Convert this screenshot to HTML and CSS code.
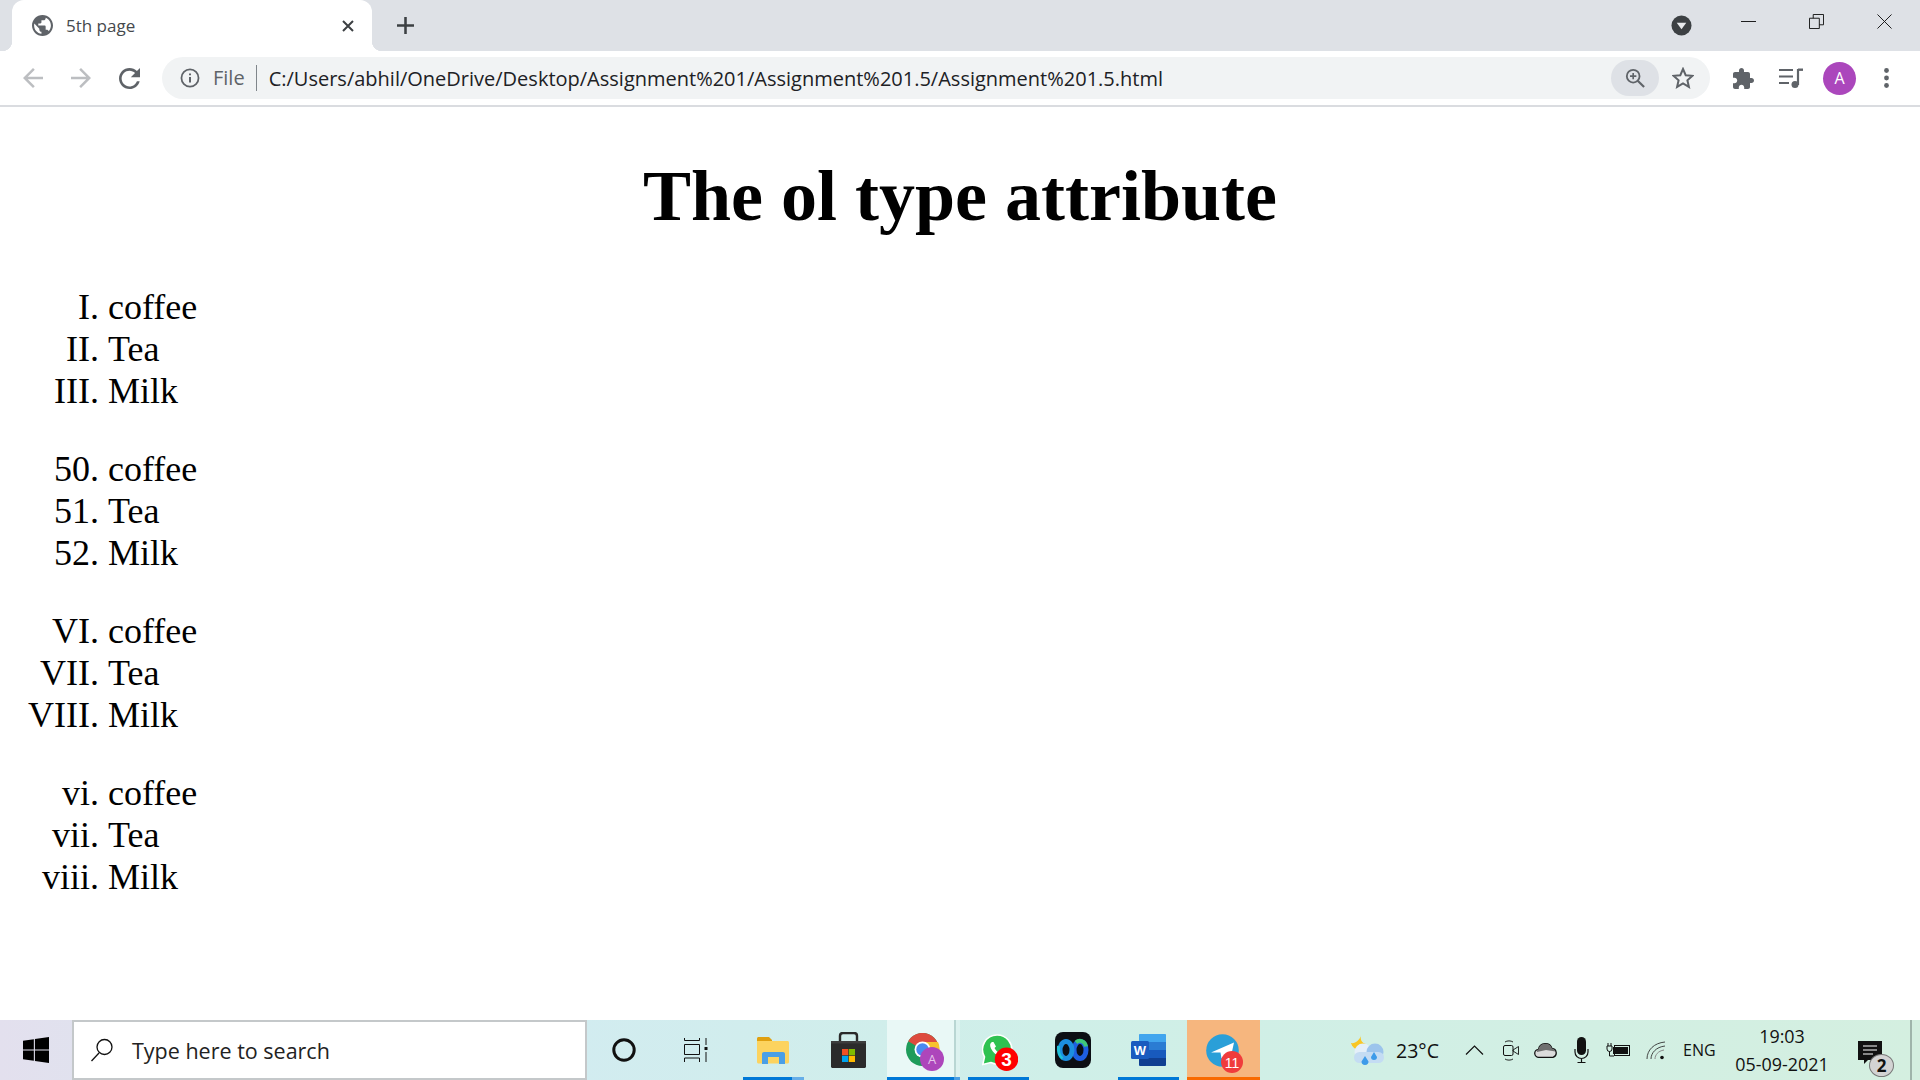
FILE: index.html
```html
<!DOCTYPE html>
<html lang="en">
<head>
  <meta charset="utf-8" />
  <title>5th page</title>
  <link rel="stylesheet" href="styles.css">
</head>
<body>
  <div class="window">
    <header class="tabstrip">
      <div class="tab">
        <svg class="favicon" viewBox="2 2 20 20"><path d="M12 2C6.48 2 2 6.48 2 12s4.48 10 10 10 10-4.48 10-10S17.52 2 12 2zm-1 17.93c-3.95-.49-7-3.85-7-7.93 0-.62.08-1.21.21-1.79L9 15v1c0 1.100.9 2 2 2v1.930zm6.900-2.540c-.26-.81-1-1.390-1.900-1.390h-1v-3c0-.55-.45-1-1-1H8v-2h2c.55 0 1-.45 1-1V7h2c1.100 0 2-.9 2-2v-.41c2.930 1.190 5 4.060 5 7.410 0 2.080-.8 3.970-2.100 5.390z" fill="#5f6368"/></svg>
        <span class="tab-title">5th page</span>
        <svg class="tab-close" viewBox="0 0 12 12"><path d="M1 1l10 10M11 1L1 11" stroke="#3c4043" stroke-width="2"/></svg>
      </div>
      <svg class="new-tab" viewBox="0 0 16 16"><path d="M8 0v16M0 8h16" stroke="#3c4043" stroke-width="2.4"/></svg>
      <div class="strip-right">
        <svg class="tab-search" viewBox="0 0 22 22"><circle cx="11" cy="11" r="10.500" fill="#3c4043"/><path d="M6 8h10l-5 7z" fill="#e8eaed"/></svg>
        <div class="win-buttons">
          <svg viewBox="0 0 16 16"><path d="M0 8h16" stroke="#111"/></svg>
          <svg viewBox="0 0 16 16"><path d="M.5 4.500h10.500v11H.5zM4.500 4.500V.5h11v11h-4.500" fill="none" stroke="#111"/></svg>
          <svg viewBox="0 0 16 16"><path d="M.5.500l15 15M15.500.500l-15 15" stroke="#111"/></svg>
        </div>
      </div>
    </header>

    <nav class="toolbar">
      <svg class="nav-icon" viewBox="4 4 16 16"><path d="M20 11H7.830l5.590-5.590L12 4l-8 8 8 8 1.410-1.410L7.830 13H20v-2z" fill="#bcbec1"/></svg>
      <svg class="nav-icon" viewBox="4 4 16 16"><path d="M12 4l-1.410 1.410L16.170 11H4v2h12.170l-5.580 5.590L12 20l8-8z" fill="#bcbec1"/></svg>
      <svg class="nav-icon reload" viewBox="4 4 16 16"><path d="M17.650 6.350C16.200 4.900 14.210 4 12 4c-4.420 0-7.990 3.580-7.990 8s3.570 8 7.990 8c3.730 0 6.840-2.550 7.730-6h-2.080c-.82 2.330-3.040 4-5.650 4-3.310 0-6-2.690-6-6s2.690-6 6-6c1.660 0 3.140.69 4.220 1.780L13 11h7V4l-2.350 2.350z" fill="#5f6368"/></svg>
      <div class="omnibox">
        <svg class="info-icon" viewBox="0 0 18 18"><circle cx="9" cy="9" r="7.700" fill="none" stroke="#5f6368" stroke-width="1.600"/><path d="M9 8v5M9 5v1.600" stroke="#5f6368" stroke-width="1.800"/></svg>
        <span class="scheme">File</span>
        <span class="url">C:/Users/abhil/OneDrive/Desktop/Assignment%201/Assignment%201.5/Assignment%201.5.html</span>
        <span class="zoom-chip">
          <svg viewBox="0 0 22 22"><circle cx="9" cy="9" r="7" fill="none" stroke="#5f6368" stroke-width="2"/><path d="M14 14l7 7" stroke="#5f6368" stroke-width="2.400"/><path d="M9 5.500v7M5.500 9h7" stroke="#5f6368" stroke-width="1.800"/></svg>
        </span>
        <svg class="star" viewBox="0 0 22 22"><path d="M11 2l2.700 6.200 6.800.6-5.100 4.500 1.500 6.600L11 16.400l-5.900 3.500 1.500-6.600L1.500 8.800l6.800-.6z" fill="none" stroke="#5f6368" stroke-width="2"/></svg>
      </div>
      <svg class="puzzle" viewBox="2 1 21 21"><path d="M20.500 11H19V7c0-1.100-.9-2-2-2h-4V3.500C13 2.120 11.880 1 10.500 1S8 2.120 8 3.500V5H4c-1.100 0-1.990.9-1.990 2v3.800H3.500c1.490 0 2.700 1.210 2.700 2.700s-1.210 2.700-2.700 2.700H2V20c0 1.100.9 2 2 2h3.800v-1.500c0-1.490 1.210-2.700 2.700-2.700 1.490 0 2.700 1.210 2.700 2.700V22H17c1.100 0 2-.9 2-2v-4h1.500c1.380 0 2.500-1.120 2.500-2.500S21.880 11 20.500 11z" fill="#5f6368"/></svg>
      <svg class="queue" viewBox="0 0 24 20"><path d="M0 2h14M0 8.500h14M0 15h10" stroke="#5f6368" stroke-width="2"/><path d="M19 1v16" stroke="#5f6368" stroke-width="2.200"/><circle cx="16" cy="16.500" r="3.500" fill="#5f6368"/><path d="M19 0.500h5v2.400h-5z" fill="#5f6368"/></svg>
      <div class="avatar">A</div>
      <svg class="menu-dots" viewBox="0 0 5 20"><circle cx="2.500" cy="2.500" r="2.400" fill="#5f6368"/><circle cx="2.500" cy="10" r="2.400" fill="#5f6368"/><circle cx="2.500" cy="17.500" r="2.400" fill="#5f6368"/></svg>
    </nav>

    <main class="page">
      <h1>The ol type attribute</h1>
      <ol type="I">
        <li>coffee</li>
        <li>Tea</li>
        <li>Milk</li>
      </ol>
      <ol start="50">
        <li>coffee</li>
        <li>Tea</li>
        <li>Milk</li>
      </ol>
      <ol type="I" start="6">
        <li>coffee</li>
        <li>Tea</li>
        <li>Milk</li>
      </ol>
      <ol type="i" start="6">
        <li>coffee</li>
        <li>Tea</li>
        <li>Milk</li>
      </ol>
    </main>

    <footer class="taskbar">
      <div class="start">
        <svg viewBox="0 0 24 24"><path d="M0 3.400l10-1.400v9.500H0zM11 1.800L24 0v11.500H11zM0 12.500h10V22L0 20.600zM11 12.500h13V24l-13-1.800z" fill="#000"/></svg>
      </div>
      <div class="searchbox">
        <svg viewBox="0 0 24 24"><circle cx="14.500" cy="9" r="7.500" fill="none" stroke="#111" stroke-width="1.300"/><path d="M9 15L1.500 23" stroke="#111" stroke-width="1.300"/></svg>
        <span>Type here to search</span>
      </div>
      <div class="task-btn">
        <svg class="ic-cortana" viewBox="0 0 24 24"><circle cx="12" cy="12" r="10.200" fill="none" stroke="#111" stroke-width="3"/></svg>
      </div>
      <div class="task-btn">
        <svg class="ic-taskview" viewBox="0 0 24 24"><path d="M.5 0v2.500h15V0M.5 6.500h15v10h-15zM.5 24v-4h15v4M22 0v7M22 14v10" fill="none" stroke="#111"/><path d="M20.500 9h3v3h-3z" fill="#111"/></svg>
      </div>
      <div class="task-btn is-open is-stacked">
        <svg class="ic-explorer" viewBox="0 0 32 27"><path d="M0 1.500C0 .7.7 0 1.500 0H12l3 3v3H0z" fill="#e0a010"/><path d="M0 4h30.500c.8 0 1.500.7 1.500 1.500V25c0 .8-.7 1.500-1.500 1.500h-29C.7 26.500 0 25.800 0 25z" fill="#fcd35f"/><path d="M5 27V17c0-1.100.9-2 2-2h19c1.100 0 2 .9 2 2v10h-6v-7H11v7z" fill="#4a9fe6"/></svg>
      </div>
      <div class="task-btn">
        <svg class="ic-store" viewBox="0 0 35 36"><path d="M9 10V4c0-1.700 1.300-3 3-3h11c1.700 0 3 1.300 3 3v6" fill="none" stroke="#2a2a2a" stroke-width="2.400"/><path d="M0 9h35v25.500c0 .8-.7 1.500-1.500 1.500h-32C.7 36 0 35.300 0 34.500z" fill="#2b2b2b"/><path d="M0 9h35v2.500H0z" fill="#3d3d3d"/><rect x="11" y="17" width="6.200" height="6.200" fill="#f25022"/><rect x="17.800" y="17" width="6.200" height="6.200" fill="#7fba00"/><rect x="11" y="23.800" width="6.200" height="6.200" fill="#00a4ef"/><rect x="17.800" y="23.800" width="6.200" height="6.200" fill="#ffb900"/></svg>
      </div>
      <div class="task-btn is-active">
        <svg class="ic-chrome" viewBox="0 0 38 38"><circle cx="16.500" cy="16.500" r="16.500" fill="#1e9c5a"/><path d="M2.200 8.200A16.500 16.500 0 0 1 33 16.500H16.500z" fill="#dd4b3e"/><path d="M16.500 9H32a16.500 16.500 0 0 1-6 21L16.500 16.500z" fill="#f7c32e"/><circle cx="16.500" cy="16.500" r="8" fill="#fff"/><circle cx="16.500" cy="16.500" r="6.200" fill="#4a8af0"/><circle cx="26" cy="26" r="12" fill="#ad46bb"/><text class="mini-a" x="26" y="31">A</text></svg>
      </div>
      <div class="task-btn is-open">
        <svg class="ic-whatsapp" viewBox="0 0 36 37"><path d="M15 1a14.500 14.500 0 0 0-12.500 21.800L.8 30.500l8-2A14.500 14.500 0 1 0 15 1z" fill="#2fc251" stroke="#fff" stroke-width="1.600"/><path d="M10 8c-2 1-2.500 3.500-1 6.500 2 4 5 6.500 9 7.500 2.500.5 4-.5 4.500-2.500l-3.500-2-1.500 1.500c-2-.8-4-2.800-5-5l1.500-1.500L11.500 8z" fill="#fff"/><circle cx="24.500" cy="25.200" r="11.700" fill="#f00"/><text class="mini-num" x="24.500" y="32">3</text></svg>
      </div>
      <div class="task-btn">
        <svg class="ic-webex" viewBox="0 0 36 36"><rect width="36" height="36" rx="8" fill="#0c0f14"/><ellipse cx="25" cy="18" rx="6" ry="8.500" fill="none" stroke="#1e5fe0" stroke-width="5"/><ellipse cx="11" cy="18" rx="6" ry="8.500" fill="none" stroke="#1c8fe0" stroke-width="5"/><path d="M3.500 14c-.5 5 .5 10 4 12.500" fill="none" stroke="#1fc0d8" stroke-width="3"/><path d="M21 10.500c3-3 9-2 10 4" fill="none" stroke="#3fc77a" stroke-width="4"/></svg>
      </div>
      <div class="task-btn is-open">
        <svg class="ic-word" viewBox="0 0 35 32"><rect x="8" width="27" height="32" rx="1.500" fill="#2b7cd3"/><path d="M8 1.500C8 .7 8.700 0 9.500 0h24c.8 0 1.500.7 1.500 1.500V8H8z" fill="#41a5ee"/><rect x="8" y="16" width="27" height="8" fill="#185abd"/><path d="M8 24h27v6.500c0 .8-.7 1.500-1.500 1.500h-24C8.700 32 8 31.300 8 30.500z" fill="#103f91"/><rect y="7" width="18" height="18" rx="1.500" fill="#1a5bbf"/><text class="mini-w" x="9" y="21">W</text></svg>
      </div>
      <div class="task-btn is-flash">
        <svg class="ic-telegram" viewBox="0 0 38 39"><circle cx="16.500" cy="16.500" r="16.300" fill="#2a9fd8"/><path d="M5 18.500L28 8.500l-3.500 16-6-3.500-3 3.500-1-6z" fill="#fff"/><circle cx="26" cy="28" r="11" fill="#f03c3c"/><text class="mini-count" x="26" y="33.500">11</text></svg>
      </div>
      <div class="tray">
        <svg class="weather" viewBox="0 0 33 31"><path d="M10 0c-1 4 .5 8 5 9l-7 7C4 14 1 12 0 8c4 1 9-3 10-8z" fill="#f9c623"/><circle cx="12" cy="17" r="8.500" fill="#e4eff9"/><circle cx="24" cy="17" r="8.500" fill="#9cc4ec"/><rect x="3" y="17" width="30" height="11" rx="5.500" fill="#c4dcf3"/><path d="M14 21l-3.500 5.500a3.500 3.500 0 0 0 7 0zM23 17l-3 5a3 3 0 0 0 6 0z" fill="#3d9be9"/></svg>
        <span class="temp">23°C</span>
        <svg class="chevron" viewBox="0 0 19 10"><path d="M1 9.500L9.500 1 18 9.500" fill="none" stroke="#111" stroke-width="1.200"/></svg>
        <svg class="ic-camera" viewBox="0 0 16 21"><rect x=".5" y="5.500" width="9.500" height="10" rx="1.500" fill="none" stroke="#111"/><path d="M10 10l5.500-3.500v8L10 11zM2 2c2-1.500 6-1.500 8 0M2 19c2 1.500 6 1.500 8 0" fill="none" stroke="#111" stroke-width=".9"/></svg>
        <svg class="ic-cloud" viewBox="0 0 24 16"><path d="M5 15.300a4 4 0 0 1-.5-8A7 7 0 0 1 18 6.500a4.500 4.500 0 0 1 1 8.800z" fill="#dcdcdc" stroke="#111" stroke-width="1.300"/><path d="M4.500 7.300A7 7 0 0 1 18 6.500c1.500.2 3 1.200 3.500 3L12 8 3 10c-.5-1 .5-2.500 1.500-2.700z" fill="#6f6f6f"/></svg>
        <svg class="ic-mic" viewBox="0 0 15 26"><rect x="3" y="0" width="9" height="18" rx="4.500" fill="#111"/><path d="M1 12v3a6.500 6.500 0 0 0 13 0v-3M7.500 21.500V25M3.500 25.500h8" fill="none" stroke="#111" stroke-width="1.200"/></svg>
        <svg class="ic-battery" viewBox="0 0 24 16"><path d="M2 1v3M5 1v3M1 4h5v3a2.500 2.500 0 0 1-5 0zM3.500 9.500V14H8" fill="none" stroke="#111"/><rect x="8.500" y="3.500" width="15" height="10" fill="none" stroke="#111"/><rect x="7" y="5" width="15" height="7" fill="#111"/></svg>
        <svg class="ic-wifi" viewBox="0 0 20 19"><path d="M1 18C1 9 8 2 19 1M5 18C5 12 10 6 19 5" fill="none" stroke="#333" stroke-width=".9"/><path d="M9 18c0-4 3-8 9-9" fill="none" stroke="#888"/><circle cx="16" cy="16.500" r="1.800" fill="#111"/></svg>
        <span class="lang">ENG</span>
        <div class="clock">
          <span>19:03</span>
          <span>05-09-2021</span>
        </div>
        <div class="notify">
          <svg viewBox="0 0 24 23"><path d="M0 0h24v19H10l-4 4v-4H0z" fill="#111"/><path d="M5 5h14M5 9h14M5 13h10" stroke="#fff" stroke-width="1.200"/></svg>
          <span class="notify-count">2</span>
        </div>
      </div>
      <div class="show-desktop"></div>
    </footer>
  </div>
</body>
</html>
```

FILE: styles.css
```css
html, body {
  margin: 0;
  padding: 0;
  height: 100%;
  background: #fff;
}
svg { display: block; flex: none; }
.window {
  height: 1080px;
  display: flex;
  flex-direction: column;
  overflow: hidden;
}

/* tab strip */
.tabstrip {
  height: 51px;
  flex: none;
  display: flex;
  align-items: center;
  background: #dee1e6;
  padding-left: 12px;
}
.tab {
  position: relative;
  width: 360px;
  height: 51px;
  background: #fff;
  border-radius: 12px 12px 0 0;
  display: flex;
  align-items: center;
  padding: 0 18px 0 20px;
  box-sizing: border-box;
}
.tab::before, .tab::after {
  content: "";
  position: absolute;
  bottom: 0;
  width: 10px;
  height: 10px;
}
.tab::before {
  left: -10px;
  background: radial-gradient(circle at 0 0, transparent 10px, #fff 10.5px);
}
.tab::after {
  right: -10px;
  background: radial-gradient(circle at 100% 0, transparent 10px, #fff 10.5px);
}
.favicon { width: 21px; height: 21px; }
.tab-title {
  margin-left: 13px;
  font: 17px "Open Sans", "Noto Sans", sans-serif;
  color: #45494d;
  flex: 1;
}
.tab-close { width: 12px; height: 12px; }
.new-tab { width: 17px; height: 17px; margin-left: 25px; }
.strip-right {
  margin-left: auto;
  display: flex;
  align-items: center;
}
.tab-search { width: 21px; height: 21px; margin-right: 49px; }
.win-buttons {
  display: flex;
  gap: 53px;
  padding-right: 28px;
  margin-bottom: 8px;
}
.win-buttons svg { width: 15px; height: 15px; }

/* toolbar */
.toolbar {
  height: 54px;
  flex: none;
  display: flex;
  align-items: center;
  background: #fff;
  border-bottom: 2px solid #dadce0;
  padding-left: 23px;
}
.nav-icon { width: 20px; height: 20px; margin-right: 28px; }
.nav-icon.reload { width: 21px; height: 21px; margin-right: 22px; }
.omnibox {
  width: 1548px;
  height: 42px;
  flex: none;
  background: #f1f3f4;
  border-radius: 21px;
  display: flex;
  align-items: center;
  padding-left: 18px;
  box-sizing: border-box;
}
.info-icon { width: 20px; height: 20px; }
.scheme {
  margin-left: 13px;
  padding-right: 11px;
  border-right: 1px solid #80868b;
  font: 20px/26px "Open Sans", "Noto Sans", sans-serif;
  color: #5f6368;
}
.url {
  margin-left: 12px;
  font: 20px "Open Sans", "Noto Sans", sans-serif;
  color: #202124;
  flex: 1;
  white-space: nowrap;
}
.zoom-chip {
  width: 48px;
  height: 36px;
  border-radius: 18px;
  background: #dee1e6;
  display: flex;
  align-items: center;
  justify-content: center;
}
.zoom-chip svg { width: 20px; height: 20px; }
.star { width: 22px; height: 22px; margin: 0 16px 0 13px; }
.puzzle { width: 21px; height: 21px; margin-left: 23px; }
.queue { width: 24px; height: 20px; margin-left: 25px; }
.avatar {
  width: 33px;
  height: 33px;
  margin-left: 20px;
  border-radius: 50%;
  background: #ab47bc;
  color: #fff;
  font: 16px/33px "Open Sans", sans-serif;
  text-align: center;
}
.menu-dots { width: 5px; height: 20px; margin-left: 28px; }

/* page content, 150% browser zoom */
.page {
  flex: 1;
  padding: 0 12px;
  font-family: "Liberation Serif", "Times New Roman", serif;
  font-size: 36px;
  color: #000;
}
h1 {
  font-size: 72px;
  font-weight: 700;
  text-align: center;
  margin: 48px 0;
  line-height: 83px;
}
ol {
  margin: 36px 0;
  padding-left: 96px;
  line-height: 42px;
}

/* windows taskbar */
.taskbar {
  height: 60px;
  flex: none;
  display: flex;
  align-items: center;
  background: linear-gradient(90deg, #e3e0ee 0%, #d2ecf0 30%, #cfefe8 55%, #d4efe0 100%);
  font-family: "Open Sans", "Noto Sans", sans-serif;
  color: #111;
}
.start {
  width: 72px;
  display: flex;
  justify-content: center;
}
.start svg { width: 26px; height: 26px; }
.searchbox {
  width: 515px;
  height: 60px;
  background: #fff;
  border: 2px solid #c4c8ca;
  box-sizing: border-box;
  display: flex;
  align-items: center;
  padding-left: 16px;
}
.searchbox svg { width: 24px; height: 24px; }
.searchbox span { margin-left: 18px; font-size: 21.500px; color: #222; }
.task-btn {
  position: relative;
  width: 75px;
  height: 60px;
  flex: none;
  display: flex;
  align-items: center;
  justify-content: center;
}
.task-btn.is-open::after, .task-btn.is-active::after {
  content: "";
  position: absolute;
  left: 6px;
  bottom: 0;
  width: 61px;
  height: 3px;
  background: #0078d7;
}
.task-btn.is-stacked::after {
  background: linear-gradient(90deg, #0078d7 49px, #66aee8 49px);
}
.task-btn.is-active {
  background: linear-gradient(90deg, #e9f8f6 67px, #b9d6d3 67px, #b9d6d3 69px, #dcf2ef 69px, #dcf2ef 73px, transparent 73px);
}
.task-btn.is-active::after {
  left: 0;
  width: 73px;
  background: linear-gradient(90deg, #0078d7 67px, #4a9ee3 67px);
}
.task-btn.is-flash {
  width: 73px;
  margin-right: 2px;
  background: #f6b67e;
}
.task-btn.is-flash::after {
  content: "";
  position: absolute;
  left: 0;
  bottom: 0;
  width: 100%;
  height: 3px;
  background: #f96a00;
}
.ic-cortana { width: 24px; height: 24px; margin-right: 2px; }
.ic-taskview { width: 24px; height: 24px; margin-right: 7px; }
.ic-explorer { width: 32px; height: 27px; margin-right: 3px; }
.ic-store { width: 35px; height: 36px; margin-right: 3px; }
.ic-chrome { width: 38px; height: 38px; margin-top: 4px; }
.ic-whatsapp { width: 36px; height: 37px; margin: 5px 0 0 1px; }
.ic-webex { width: 36px; height: 36px; margin-right: 3px; }
.ic-word { width: 35px; height: 32px; margin-right: 3px; }
.ic-telegram { width: 38px; height: 39px; margin: 6px 0 0 3px; }
.mini-a { font: 13px "Open Sans", sans-serif; fill: #e5c4ea; text-anchor: middle; }
.mini-num { font: 700 19px "Liberation Sans", sans-serif; fill: #fff; text-anchor: middle; }
.mini-w { font: 700 13px "Liberation Sans", sans-serif; fill: #fff; text-anchor: middle; }
.mini-count { font: 14px "Liberation Sans", sans-serif; fill: #fff; text-anchor: middle; }
.tray {
  margin-left: auto;
  display: flex;
  align-items: center;
  padding-right: 16px;
}
.weather { width: 33px; height: 31px; margin-right: -1px; }
.temp { width: 43px; font-size: 19.500px; margin-left: 13px; white-space: nowrap; }
.chevron { width: 19px; height: 10px; margin-left: 26px; }
.ic-camera { width: 16px; height: 21px; margin-left: 19px; }
.ic-cloud { width: 24px; height: 16px; margin-left: 15px; }
.ic-mic { width: 15px; height: 26px; margin-left: 16px; }
.ic-battery { width: 24px; height: 16px; margin-left: 17px; }
.ic-wifi { width: 20px; height: 19px; margin-left: 16px; }
.lang { width: 33px; font-size: 16px; margin-left: 17px; white-space: nowrap; }
.clock {
  margin-left: 20px;
  width: 92px;
  display: flex;
  flex-direction: column;
  align-items: center;
  gap: 5px;
  font-size: 17.900px;
  line-height: 23px;
  white-space: nowrap;
}
.notify {
  position: relative;
  align-self: flex-start;
  margin: 18px 0 0 30px;
  width: 36px;
  height: 36px;
}
.notify svg { width: 24px; height: 23px; }
.notify-count {
  position: absolute;
  left: 11px;
  top: 13px;
  width: 23px;
  height: 21px;
  border: 1px solid #777;
  border-radius: 50%;
  background: #d3d3d3;
  font: 700 17px/21px "Open Sans", sans-serif;
  text-align: center;
}
.show-desktop {
  width: 8px;
  height: 60px;
  border-left: 2px solid #9fb5ab;
}
```
